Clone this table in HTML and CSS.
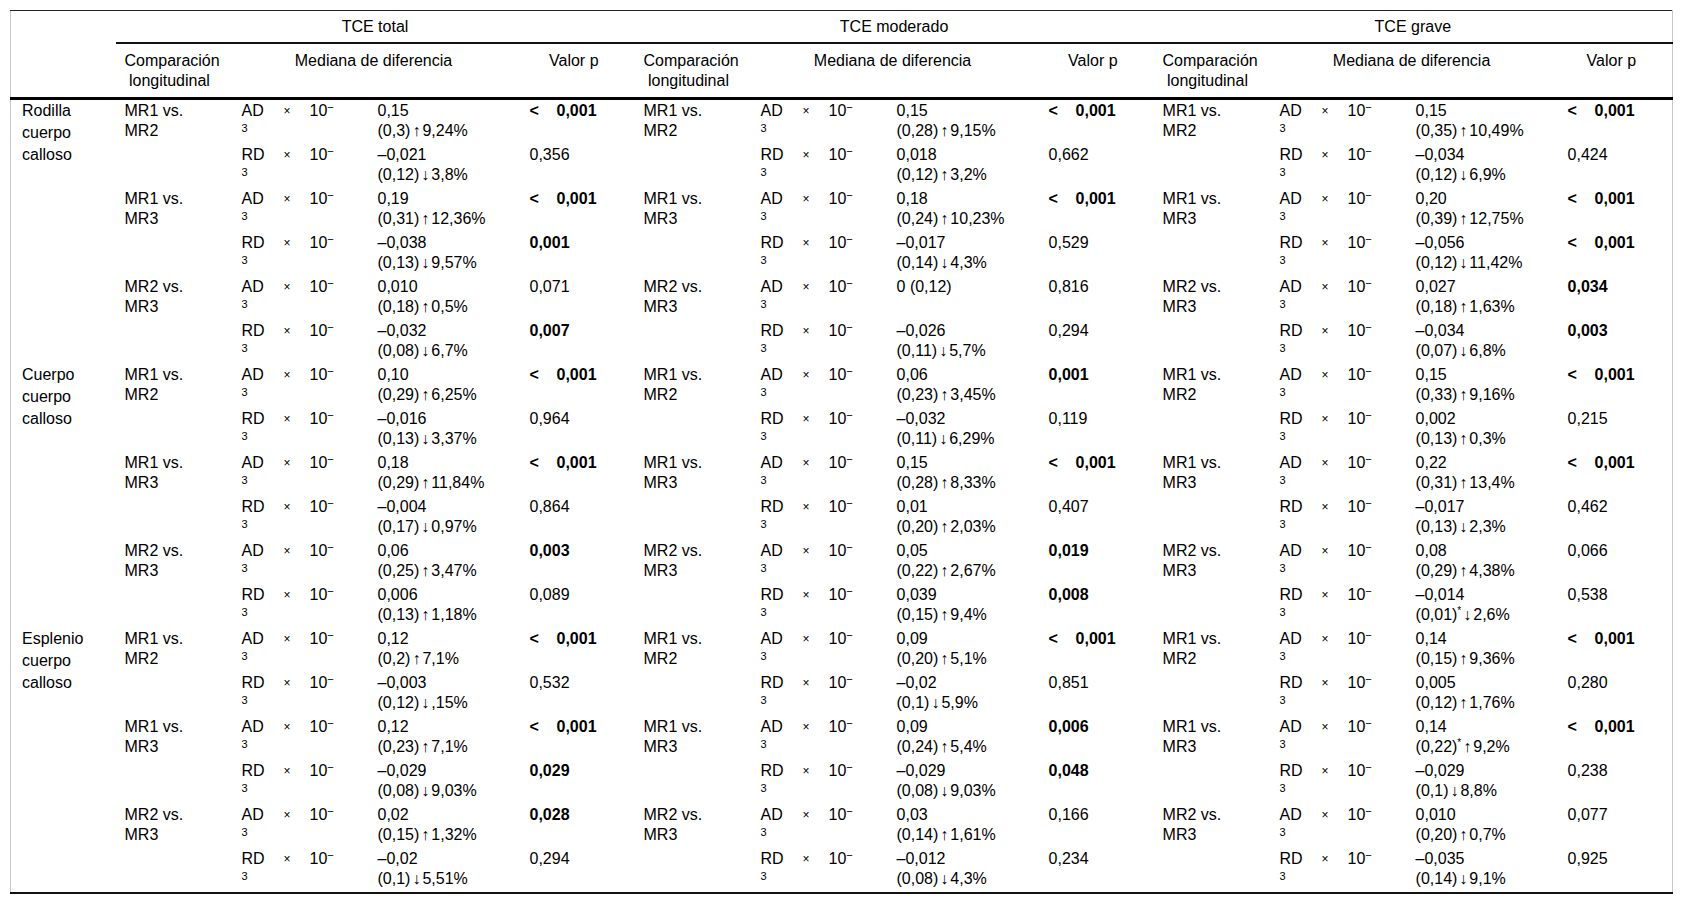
FILE: index.html
```html
<!DOCTYPE html>
<html lang="es">
<head>
<meta charset="utf-8">
<title>Tabla</title>
<link rel="stylesheet" href="styles.css">
</head>
<body>
<div class="wrap">
<table class="tbl">
<colgroup>
<col class="w-lab">
<col class="w-c"><col class="w-m"><col class="w-x"><col class="w-t"><col class="w-v"><col class="w-p">
<col class="w-c"><col class="w-m"><col class="w-x"><col class="w-t"><col class="w-v"><col class="w-p">
<col class="w-c"><col class="w-m"><col class="w-x"><col class="w-t"><col class="w-v"><col class="w-p">
</colgroup>
<thead>
<tr class="h1">
<th class="blank"></th>
<th class="grp" colspan="6">TCE total</th>
<th class="grp" colspan="6">TCE moderado</th>
<th class="grp" colspan="6">TCE grave</th>
</tr>
<tr class="h2">
<th class="blank"></th>
<th class="hc">Comparación<br>&nbsp;longitudinal</th><th class="hm" colspan="4">Mediana de diferencia</th><th class="hp">Valor p</th>
<th class="hc">Comparación<br>&nbsp;longitudinal</th><th class="hm" colspan="4">Mediana de diferencia</th><th class="hp">Valor p</th>
<th class="hc">Comparación<br>&nbsp;longitudinal</th><th class="hm" colspan="4">Mediana de diferencia</th><th class="hp">Valor p</th>
</tr>
</thead>
<tbody>
<!-- Rodilla -->
<tr>
<td class="lab" rowspan="6">Rodilla<br>cuerpo<br>calloso</td>
<td class="c" rowspan="2">MR1 vs.<br>MR2</td><td class="m">AD<br><sup>3</sup></td><td class="x">×</td><td class="t">10<sup>−</sup></td><td class="v">0,15<br>(0,3)<span class="ar">↑</span>9,24%</td><td class="p"><b class="lt">&lt;</b><b>0,001</b></td>
<td class="c" rowspan="2">MR1 vs.<br>MR2</td><td class="m">AD<br><sup>3</sup></td><td class="x">×</td><td class="t">10<sup>−</sup></td><td class="v">0,15<br>(0,28)<span class="ar">↑</span>9,15%</td><td class="p"><b class="lt">&lt;</b><b>0,001</b></td>
<td class="c" rowspan="2">MR1 vs.<br>MR2</td><td class="m">AD<br><sup>3</sup></td><td class="x">×</td><td class="t">10<sup>−</sup></td><td class="v">0,15<br>(0,35)<span class="ar">↑</span>10,49%</td><td class="p"><b class="lt">&lt;</b><b>0,001</b></td>
</tr>
<tr>
<td class="m">RD<br><sup>3</sup></td><td class="x">×</td><td class="t">10<sup>−</sup></td><td class="v">–0,021<br>(0,12)<span class="ar">↓</span>3,8%</td><td class="p">0,356</td>
<td class="m">RD<br><sup>3</sup></td><td class="x">×</td><td class="t">10<sup>−</sup></td><td class="v">0,018<br>(0,12)<span class="ar">↑</span>3,2%</td><td class="p">0,662</td>
<td class="m">RD<br><sup>3</sup></td><td class="x">×</td><td class="t">10<sup>−</sup></td><td class="v">–0,034<br>(0,12)<span class="ar">↓</span>6,9%</td><td class="p">0,424</td>
</tr>
<tr>
<td class="c" rowspan="2">MR1 vs.<br>MR3</td><td class="m">AD<br><sup>3</sup></td><td class="x">×</td><td class="t">10<sup>−</sup></td><td class="v">0,19<br>(0,31)<span class="ar">↑</span>12,36%</td><td class="p"><b class="lt">&lt;</b><b>0,001</b></td>
<td class="c" rowspan="2">MR1 vs.<br>MR3</td><td class="m">AD<br><sup>3</sup></td><td class="x">×</td><td class="t">10<sup>−</sup></td><td class="v">0,18<br>(0,24)<span class="ar">↑</span>10,23%</td><td class="p"><b class="lt">&lt;</b><b>0,001</b></td>
<td class="c" rowspan="2">MR1 vs.<br>MR3</td><td class="m">AD<br><sup>3</sup></td><td class="x">×</td><td class="t">10<sup>−</sup></td><td class="v">0,20<br>(0,39)<span class="ar">↑</span>12,75%</td><td class="p"><b class="lt">&lt;</b><b>0,001</b></td>
</tr>
<tr>
<td class="m">RD<br><sup>3</sup></td><td class="x">×</td><td class="t">10<sup>−</sup></td><td class="v">–0,038<br>(0,13)<span class="ar">↓</span>9,57%</td><td class="p"><b>0,001</b></td>
<td class="m">RD<br><sup>3</sup></td><td class="x">×</td><td class="t">10<sup>−</sup></td><td class="v">–0,017<br>(0,14)<span class="ar">↓</span>4,3%</td><td class="p">0,529</td>
<td class="m">RD<br><sup>3</sup></td><td class="x">×</td><td class="t">10<sup>−</sup></td><td class="v">–0,056<br>(0,12)<span class="ar">↓</span>11,42%</td><td class="p"><b class="lt">&lt;</b><b>0,001</b></td>
</tr>
<tr>
<td class="c" rowspan="2">MR2 vs.<br>MR3</td><td class="m">AD<br><sup>3</sup></td><td class="x">×</td><td class="t">10<sup>−</sup></td><td class="v">0,010<br>(0,18)<span class="ar">↑</span>0,5%</td><td class="p">0,071</td>
<td class="c" rowspan="2">MR2 vs.<br>MR3</td><td class="m">AD<br><sup>3</sup></td><td class="x">×</td><td class="t">10<sup>−</sup></td><td class="v">0 (0,12)</td><td class="p">0,816</td>
<td class="c" rowspan="2">MR2 vs.<br>MR3</td><td class="m">AD<br><sup>3</sup></td><td class="x">×</td><td class="t">10<sup>−</sup></td><td class="v">0,027<br>(0,18)<span class="ar">↑</span>1,63%</td><td class="p"><b>0,034</b></td>
</tr>
<tr>
<td class="m">RD<br><sup>3</sup></td><td class="x">×</td><td class="t">10<sup>−</sup></td><td class="v">–0,032<br>(0,08)<span class="ar">↓</span>6,7%</td><td class="p"><b>0,007</b></td>
<td class="m">RD<br><sup>3</sup></td><td class="x">×</td><td class="t">10<sup>−</sup></td><td class="v">–0,026<br>(0,11)<span class="ar">↓</span>5,7%</td><td class="p">0,294</td>
<td class="m">RD<br><sup>3</sup></td><td class="x">×</td><td class="t">10<sup>−</sup></td><td class="v">–0,034<br>(0,07)<span class="ar">↓</span>6,8%</td><td class="p"><b>0,003</b></td>
</tr>
<!-- Cuerpo -->
<tr>
<td class="lab" rowspan="6">Cuerpo<br>cuerpo<br>calloso</td>
<td class="c" rowspan="2">MR1 vs.<br>MR2</td><td class="m">AD<br><sup>3</sup></td><td class="x">×</td><td class="t">10<sup>−</sup></td><td class="v">0,10<br>(0,29)<span class="ar">↑</span>6,25%</td><td class="p"><b class="lt">&lt;</b><b>0,001</b></td>
<td class="c" rowspan="2">MR1 vs.<br>MR2</td><td class="m">AD<br><sup>3</sup></td><td class="x">×</td><td class="t">10<sup>−</sup></td><td class="v">0,06<br>(0,23)<span class="ar">↑</span>3,45%</td><td class="p"><b>0,001</b></td>
<td class="c" rowspan="2">MR1 vs.<br>MR2</td><td class="m">AD<br><sup>3</sup></td><td class="x">×</td><td class="t">10<sup>−</sup></td><td class="v">0,15<br>(0,33)<span class="ar">↑</span>9,16%</td><td class="p"><b class="lt">&lt;</b><b>0,001</b></td>
</tr>
<tr>
<td class="m">RD<br><sup>3</sup></td><td class="x">×</td><td class="t">10<sup>−</sup></td><td class="v">–0,016<br>(0,13)<span class="ar">↓</span>3,37%</td><td class="p">0,964</td>
<td class="m">RD<br><sup>3</sup></td><td class="x">×</td><td class="t">10<sup>−</sup></td><td class="v">–0,032<br>(0,11)<span class="ar">↓</span>6,29%</td><td class="p">0,119</td>
<td class="m">RD<br><sup>3</sup></td><td class="x">×</td><td class="t">10<sup>−</sup></td><td class="v">0,002<br>(0,13)<span class="ar">↑</span>0,3%</td><td class="p">0,215</td>
</tr>
<tr>
<td class="c" rowspan="2">MR1 vs.<br>MR3</td><td class="m">AD<br><sup>3</sup></td><td class="x">×</td><td class="t">10<sup>−</sup></td><td class="v">0,18<br>(0,29)<span class="ar">↑</span>11,84%</td><td class="p"><b class="lt">&lt;</b><b>0,001</b></td>
<td class="c" rowspan="2">MR1 vs.<br>MR3</td><td class="m">AD<br><sup>3</sup></td><td class="x">×</td><td class="t">10<sup>−</sup></td><td class="v">0,15<br>(0,28)<span class="ar">↑</span>8,33%</td><td class="p"><b class="lt">&lt;</b><b>0,001</b></td>
<td class="c" rowspan="2">MR1 vs.<br>MR3</td><td class="m">AD<br><sup>3</sup></td><td class="x">×</td><td class="t">10<sup>−</sup></td><td class="v">0,22<br>(0,31)<span class="ar">↑</span>13,4%</td><td class="p"><b class="lt">&lt;</b><b>0,001</b></td>
</tr>
<tr>
<td class="m">RD<br><sup>3</sup></td><td class="x">×</td><td class="t">10<sup>−</sup></td><td class="v">–0,004<br>(0,17)<span class="ar">↓</span>0,97%</td><td class="p">0,864</td>
<td class="m">RD<br><sup>3</sup></td><td class="x">×</td><td class="t">10<sup>−</sup></td><td class="v">0,01<br>(0,20)<span class="ar">↑</span>2,03%</td><td class="p">0,407</td>
<td class="m">RD<br><sup>3</sup></td><td class="x">×</td><td class="t">10<sup>−</sup></td><td class="v">–0,017<br>(0,13)<span class="ar">↓</span>2,3%</td><td class="p">0,462</td>
</tr>
<tr>
<td class="c" rowspan="2">MR2 vs.<br>MR3</td><td class="m">AD<br><sup>3</sup></td><td class="x">×</td><td class="t">10<sup>−</sup></td><td class="v">0,06<br>(0,25)<span class="ar">↑</span>3,47%</td><td class="p"><b>0,003</b></td>
<td class="c" rowspan="2">MR2 vs.<br>MR3</td><td class="m">AD<br><sup>3</sup></td><td class="x">×</td><td class="t">10<sup>−</sup></td><td class="v">0,05<br>(0,22)<span class="ar">↑</span>2,67%</td><td class="p"><b>0,019</b></td>
<td class="c" rowspan="2">MR2 vs.<br>MR3</td><td class="m">AD<br><sup>3</sup></td><td class="x">×</td><td class="t">10<sup>−</sup></td><td class="v">0,08<br>(0,29)<span class="ar">↑</span>4,38%</td><td class="p">0,066</td>
</tr>
<tr>
<td class="m">RD<br><sup>3</sup></td><td class="x">×</td><td class="t">10<sup>−</sup></td><td class="v">0,006<br>(0,13)<span class="ar">↑</span>1,18%</td><td class="p">0,089</td>
<td class="m">RD<br><sup>3</sup></td><td class="x">×</td><td class="t">10<sup>−</sup></td><td class="v">0,039<br>(0,15)<span class="ar">↑</span>9,4%</td><td class="p"><b>0,008</b></td>
<td class="m">RD<br><sup>3</sup></td><td class="x">×</td><td class="t">10<sup>−</sup></td><td class="v">–0,014<br>(0,01)<sup class="ast">*</sup><span class="ar">↓</span>2,6%</td><td class="p">0,538</td>
</tr>
<!-- Esplenio -->
<tr>
<td class="lab" rowspan="6">Esplenio<br>cuerpo<br>calloso</td>
<td class="c" rowspan="2">MR1 vs.<br>MR2</td><td class="m">AD<br><sup>3</sup></td><td class="x">×</td><td class="t">10<sup>−</sup></td><td class="v">0,12<br>(0,2)<span class="ar">↑</span>7,1%</td><td class="p"><b class="lt">&lt;</b><b>0,001</b></td>
<td class="c" rowspan="2">MR1 vs.<br>MR2</td><td class="m">AD<br><sup>3</sup></td><td class="x">×</td><td class="t">10<sup>−</sup></td><td class="v">0,09<br>(0,20)<span class="ar">↑</span>5,1%</td><td class="p"><b class="lt">&lt;</b><b>0,001</b></td>
<td class="c" rowspan="2">MR1 vs.<br>MR2</td><td class="m">AD<br><sup>3</sup></td><td class="x">×</td><td class="t">10<sup>−</sup></td><td class="v">0,14<br>(0,15)<span class="ar">↑</span>9,36%</td><td class="p"><b class="lt">&lt;</b><b>0,001</b></td>
</tr>
<tr>
<td class="m">RD<br><sup>3</sup></td><td class="x">×</td><td class="t">10<sup>−</sup></td><td class="v">–0,003<br>(0,12)<span class="ar">↓</span>,15%</td><td class="p">0,532</td>
<td class="m">RD<br><sup>3</sup></td><td class="x">×</td><td class="t">10<sup>−</sup></td><td class="v">–0,02<br>(0,1)<span class="ar">↓</span>5,9%</td><td class="p">0,851</td>
<td class="m">RD<br><sup>3</sup></td><td class="x">×</td><td class="t">10<sup>−</sup></td><td class="v">0,005<br>(0,12)<span class="ar">↑</span>1,76%</td><td class="p">0,280</td>
</tr>
<tr>
<td class="c" rowspan="2">MR1 vs.<br>MR3</td><td class="m">AD<br><sup>3</sup></td><td class="x">×</td><td class="t">10<sup>−</sup></td><td class="v">0,12<br>(0,23)<span class="ar">↑</span>7,1%</td><td class="p"><b class="lt">&lt;</b><b>0,001</b></td>
<td class="c" rowspan="2">MR1 vs.<br>MR3</td><td class="m">AD<br><sup>3</sup></td><td class="x">×</td><td class="t">10<sup>−</sup></td><td class="v">0,09<br>(0,24)<span class="ar">↑</span>5,4%</td><td class="p"><b>0,006</b></td>
<td class="c" rowspan="2">MR1 vs.<br>MR3</td><td class="m">AD<br><sup>3</sup></td><td class="x">×</td><td class="t">10<sup>−</sup></td><td class="v">0,14<br>(0,22)<sup class="ast">*</sup><span class="ar">↑</span>9,2%</td><td class="p"><b class="lt">&lt;</b><b>0,001</b></td>
</tr>
<tr>
<td class="m">RD<br><sup>3</sup></td><td class="x">×</td><td class="t">10<sup>−</sup></td><td class="v">–0,029<br>(0,08)<span class="ar">↓</span>9,03%</td><td class="p"><b>0,029</b></td>
<td class="m">RD<br><sup>3</sup></td><td class="x">×</td><td class="t">10<sup>−</sup></td><td class="v">–0,029<br>(0,08)<span class="ar">↓</span>9,03%</td><td class="p"><b>0,048</b></td>
<td class="m">RD<br><sup>3</sup></td><td class="x">×</td><td class="t">10<sup>−</sup></td><td class="v">–0,029<br>(0,1)<span class="ar">↓</span>8,8%</td><td class="p">0,238</td>
</tr>
<tr>
<td class="c" rowspan="2">MR2 vs.<br>MR3</td><td class="m">AD<br><sup>3</sup></td><td class="x">×</td><td class="t">10<sup>−</sup></td><td class="v">0,02<br>(0,15)<span class="ar">↑</span>1,32%</td><td class="p"><b>0,028</b></td>
<td class="c" rowspan="2">MR2 vs.<br>MR3</td><td class="m">AD<br><sup>3</sup></td><td class="x">×</td><td class="t">10<sup>−</sup></td><td class="v">0,03<br>(0,14)<span class="ar">↑</span>1,61%</td><td class="p">0,166</td>
<td class="c" rowspan="2">MR2 vs.<br>MR3</td><td class="m">AD<br><sup>3</sup></td><td class="x">×</td><td class="t">10<sup>−</sup></td><td class="v">0,010<br>(0,20)<span class="ar">↑</span>0,7%</td><td class="p">0,077</td>
</tr>
<tr>
<td class="m">RD<br><sup>3</sup></td><td class="x">×</td><td class="t">10<sup>−</sup></td><td class="v">–0,02<br>(0,1)<span class="ar">↓</span>5,51%</td><td class="p">0,294</td>
<td class="m">RD<br><sup>3</sup></td><td class="x">×</td><td class="t">10<sup>−</sup></td><td class="v">–0,012<br>(0,08)<span class="ar">↓</span>4,3%</td><td class="p">0,234</td>
<td class="m">RD<br><sup>3</sup></td><td class="x">×</td><td class="t">10<sup>−</sup></td><td class="v">–0,035<br>(0,14)<span class="ar">↓</span>9,1%</td><td class="p">0,925</td>
</tr>
</tbody>
</table>
</div>
</body>
</html>
```
FILE: styles.css
```css
html, body {
  margin: 0;
  padding: 0;
  background: #ffffff;
}
body {
  font-family: "Liberation Sans", Arial, Helvetica, sans-serif;
  font-size: 16px;
  color: #000;
}
.wrap {
  padding: 10px 0 0 10px;
}
.tbl {
  border-collapse: collapse;
  table-layout: fixed;
  width: 1662px;
  border-top: 1px solid #222;
  border-bottom: 2px solid #111;
  border-left: 1px solid #c8c8c8;
  border-right: 1px solid #c8c8c8;
}
.w-lab { width: 105px; }
.w-c { width: 114px; }
.w-m { width: 44px; }
.w-x { width: 26px; }
.w-t { width: 66px; }
.w-v { width: 152px; }
.w-p { width: 117px; }

th {
  font-weight: normal;
  padding: 0;
}
.h1 th {
  height: 31px;
  text-align: center;
  vertical-align: middle;
  line-height: 20px;
}
.h1 th.grp {
  border-bottom: 2px solid #111;
}
.h2 th {
  height: 46px;
  vertical-align: top;
  line-height: 20px;
  padding-top: 7px;
  border-bottom: 3px solid #000;
}
.hc {
  text-align: left;
  padding-left: 9px !important;
}
.hm {
  text-align: center;
}
.hp {
  text-align: right;
  padding-right: 36px !important;
}

td {
  vertical-align: top;
  padding: 1px 0 3px 0;
  line-height: 20px;
  white-space: nowrap;
}
.lab { padding-left: 11px; line-height: 22px; padding-top: 0; }
.c { padding-left: 9px; }
.m { padding-left: 12px; }
.x { padding-left: 10px; font-size: 12px; }
.t { padding-left: 10px; }
.v { padding-left: 12px; }
.p { padding-left: 12px; }

sup {
  font-size: 11px;
  line-height: 0;
  vertical-align: 5px;
}
.m sup {
  vertical-align: 4px;
}
.t sup {
  vertical-align: 5px;
}
sup.ast {
  font-size: 10px;
  vertical-align: 6px;
}
.ar {
  display: inline-block;
  padding: 0 2px;
}
b { font-weight: bold; }
.lt {
  display: inline-block;
  width: 27px;
}
```
